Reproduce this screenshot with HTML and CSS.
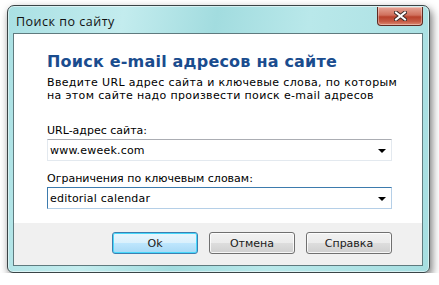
FILE: index.html
```html
<!DOCTYPE html>
<html lang="ru">
<head>
  <meta charset="UTF-8">
  <title>Поиск по сайту</title>
  <link rel="stylesheet" href="styles.css">
</head>
<body>

  <div class="window">
    <div class="titlebar">
      <span class="title">Поиск по сайту</span>
      <div class="close-btn">
        <svg width="13" height="10" viewBox="0 0 13 10">
          <path d="M2 1.5 L11 8.5 M11 1.5 L2 8.5" stroke="#3a2a28" stroke-width="4" stroke-linecap="square"/>
          <path d="M2 1.5 L11 8.5 M11 1.5 L2 8.5" stroke="#ffffff" stroke-width="2" stroke-linecap="square"/>
        </svg>
      </div>
    </div>

    <div class="client">
      <div class="content">
        <h1>Поиск e-mail адресов на сайте</h1>
        <p class="intro">Введите URL адрес сайта и ключевые слова, по которым<br>на этом сайте надо произвести поиск e-mail адресов</p>

        <label class="field-label">URL-адрес сайта:</label>
        <div class="combo">
          <span class="combo-text">www.eweek.com</span>
          <span class="arrow"></span>
        </div>

        <label class="field-label second">Ограничения по ключевым словам:</label>
        <div class="combo focused">
          <span class="combo-text">editorial calendar</span>
          <span class="arrow"></span>
        </div>
      </div>

      <div class="buttons">
        <button class="btn default">Ok</button>
        <button class="btn">Отмена</button>
        <button class="btn">Справка</button>
      </div>
    </div>
  </div>

</body>
</html>
```

FILE: styles.css
```css
body {
  margin: 0;
  padding: 5px 0 0 7px;
  background: #ffffff;
  font-family: 'DejaVu Sans', Verdana, sans-serif;
}

.window {
  box-sizing: border-box;
  width: 423px;
  height: 268px;
  padding: 0 6px 6px 5px;
  border: 1px solid #3a4446;
  border-radius: 7px 7px 6px 6px;
  background: linear-gradient(100deg, #a9e0e3 0%, #c3ecee 25%, #a2dcdf 45%, #b9e8ea 65%, #a6dee1 100%);
  box-shadow: 2px 4px 8px rgba(0, 0, 0, 0.55), inset 0 0 0 1px rgba(255, 255, 255, 0.5);
  display: flex;
  flex-direction: column;
}

.titlebar {
  height: 27px;
  display: flex;
  justify-content: space-between;
  align-items: flex-start;
}

.title {
  font-family: 'Open Sans', sans-serif;
  font-size: 12.5px;
  letter-spacing: 0.5px;
  color: #111;
  padding: 7px 0 0 3px;
}

.close-btn {
  box-sizing: border-box;
  width: 46px;
  height: 19px;
  margin: 1px 0 0 0;
  border: 1px solid #5e2a22;
  border-top: none;
  border-radius: 0 0 4px 4px;
  background: linear-gradient(#e7a697 0%, #d0705d 45%, #b8412c 55%, #c55a44 80%, #dd8a72 100%);
  box-shadow: inset 0 0 0 1px rgba(255, 255, 255, 0.35);
  display: flex;
  align-items: center;
  justify-content: center;
}

.client {
  flex: 1;
  border: 1px solid #5f7a7e;
  background: #f0f0f0;
  display: flex;
  flex-direction: column;
}

.content {
  height: 189px;
  box-sizing: border-box;
  background: #ffffff;
  padding: 19px 30px 0 33px;
}

h1 {
  margin: 0;
  font-size: 16px;
  line-height: 18px;
  letter-spacing: 0.2px;
  font-weight: bold;
  color: #1a4c8e;
}

.intro {
  margin: 5px 0 0;
  font-size: 11px;
  line-height: 13px;
  letter-spacing: 0.35px;
  white-space: nowrap;
  color: #000;
}

.field-label {
  display: block;
  margin-top: 22px;
  font-size: 11px;
  line-height: 13px;
  color: #000;
}

.field-label.second {
  margin-top: 11px;
}

.combo {
  box-sizing: border-box;
  height: 22px;
  margin-top: 2px;
  border: 1px solid #e3e9ef;
  border-top-color: #abadb3;
  background: #fff;
  display: flex;
  align-items: center;
  justify-content: space-between;
  padding: 0 5px 0 2px;
}

.combo.focused {
  border-color: #b5cfe7;
  border-top-color: #3d7bad;
  border-left-color: #3d7bad;
}

.combo-text {
  font-size: 11px;
  letter-spacing: 0.2px;
  color: #000;
}

.arrow {
  width: 0;
  height: 0;
  border-left: 4px solid transparent;
  border-right: 4px solid transparent;
  border-top: 4px solid #000;
  margin-top: 2px;
}

.buttons {
  flex: 1;
  display: flex;
  justify-content: flex-end;
  gap: 11px;
  padding: 9px 30px 0 0;
}

.btn {
  box-sizing: border-box;
  width: 86px;
  height: 22px;
  border: 1px solid #707070;
  border-radius: 3px;
  background: linear-gradient(#f2f2f2 0%, #ebebeb 50%, #dddddd 51%, #cfcfcf 100%);
  box-shadow: inset 0 0 0 1px rgba(255, 255, 255, 0.8);
  font-family: 'DejaVu Sans', Verdana, sans-serif;
  font-size: 11px;
  color: #1a1a1a;
  padding: 0;
}

.btn.default {
  border-color: #3c7fb1;
  background: linear-gradient(#eaf6fd 0%, #d9f0fc 50%, #bee6fd 51%, #a7d9f5 100%);
  box-shadow: inset 0 0 0 1px #48d8fb;
}
```
